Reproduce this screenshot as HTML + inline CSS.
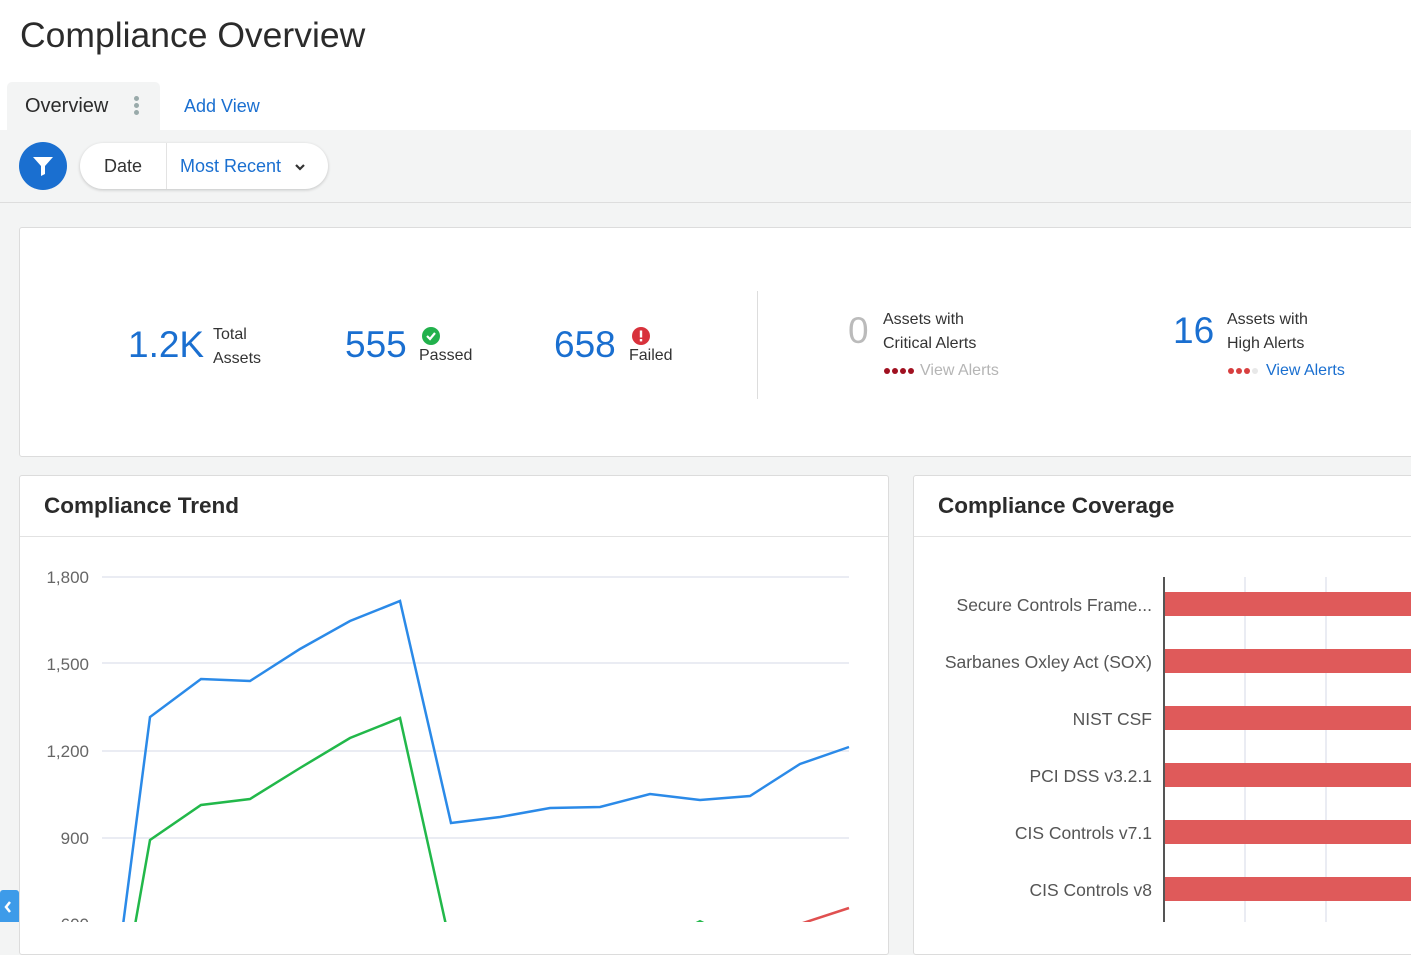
<!DOCTYPE html>
<html><head><meta charset="utf-8"><style>
*{box-sizing:border-box;margin:0;padding:0}
body{width:1411px;height:922px;overflow:hidden;font-family:"Liberation Sans",sans-serif;background:#f3f4f4;position:relative;color:#333}
.abs{position:absolute}
.top{position:absolute;left:0;top:0;width:1411px;height:130px;background:#fff}
.card{position:absolute;background:#fff;border:1px solid #dcdcdc;border-radius:3px}
.blue{color:#1a6fd0}
.dot{display:inline-block;width:6px;height:6px;border-radius:50%;margin-right:2px;vertical-align:middle}
</style></head><body>
<div class="top"></div>
<div class="abs" style="left:20px;top:15px;font-size:35.5px;color:#2b2b2b">Compliance Overview</div>
<div class="abs" style="left:7px;top:82px;width:153px;height:48px;background:#f3f4f4;border-radius:5px 5px 0 0"></div>
<div class="abs" style="left:25px;top:95px;font-size:20px;color:#2b2b2b">Overview</div>
<div class="abs" style="left:134px;top:96px;width:6px;height:20px">
<div style="width:5px;height:5px;border-radius:50%;background:#9aa;margin-bottom:2px"></div><div style="width:5px;height:5px;border-radius:50%;background:#9aa;margin-bottom:2px"></div><div style="width:5px;height:5px;border-radius:50%;background:#9aa"></div></div>
<div class="abs blue" style="left:184px;top:96px;font-size:18px">Add View</div>
<div class="abs" style="left:19px;top:142px;width:48px;height:48px;border-radius:50%;background:#1a6fd0"></div>
<svg class="abs" style="left:31px;top:154px" width="24" height="24" viewBox="0 0 24 24"><path d="M2 3h20l-8 9v8l-4 2v-10z" fill="#fff"/></svg>
<div class="abs" style="left:80px;top:143px;width:248px;height:46px;background:#fff;border-radius:23px;box-shadow:0 1px 3px rgba(0,0,0,.2)"></div>
<div class="abs" style="left:166px;top:143px;width:1px;height:46px;background:#e3e3e3"></div>
<div class="abs" style="left:104px;top:156px;font-size:18px;color:#333">Date</div>
<div class="abs blue" style="left:180px;top:156px;font-size:18px">Most Recent</div>
<svg class="abs" style="left:294px;top:162px" width="12" height="10"><path d="M2 3l4 4 4-4" stroke="#333" stroke-width="2.2" fill="none"/></svg>
<div class="abs" style="left:0;top:202px;width:1411px;height:1px;background:#ddd"></div>

<div class="card" style="left:19px;top:227px;width:1400px;height:230px"></div>
<div class="abs blue" style="left:128px;top:324px;font-size:37px">1.2K</div>
<div class="abs" style="left:213px;top:323px;font-size:16px;line-height:24px;color:#333">Total<br>Assets</div>
<div class="abs blue" style="left:345px;top:324px;font-size:37px">555</div>
<svg class="abs" style="left:422px;top:327px" width="18" height="18"><circle cx="9" cy="9" r="9" fill="#22b14c"/><path d="M5 9l3 3 5-6" stroke="#fff" stroke-width="2.2" fill="none"/></svg>
<div class="abs" style="left:419px;top:347px;font-size:16px;color:#333">Passed</div>
<div class="abs blue" style="left:554px;top:324px;font-size:37px">658</div>
<svg class="abs" style="left:632px;top:327px" width="18" height="18"><circle cx="9" cy="9" r="9" fill="#d8323c"/><rect x="7.8" y="3.5" width="2.4" height="7" fill="#fff"/><rect x="7.8" y="12" width="2.4" height="2.4" fill="#fff"/></svg>
<div class="abs" style="left:629px;top:347px;font-size:16px;color:#333">Failed</div>
<div class="abs" style="left:757px;top:291px;width:1px;height:108px;background:#ddd"></div>
<div class="abs" style="left:848px;top:310px;font-size:37px;color:#bbb">0</div>
<div class="abs" style="left:883px;top:308px;font-size:16px;line-height:24px;color:#333">Assets with<br>Critical Alerts</div>
<div class="abs" style="left:884px;top:362px;font-size:16px;color:#b5b5b5;white-space:nowrap"><span class="dot" style="background:#a01020"></span><span class="dot" style="background:#a01020"></span><span class="dot" style="background:#a01020"></span><span class="dot" style="background:#a01020;margin-right:6px"></span>View Alerts</div>
<div class="abs blue" style="left:1173px;top:310px;font-size:37px">16</div>
<div class="abs" style="left:1227px;top:308px;font-size:16px;line-height:24px;color:#333">Assets with<br>High Alerts</div>
<div class="abs blue" style="left:1228px;top:362px;font-size:16px;white-space:nowrap"><span class="dot" style="background:#d84040"></span><span class="dot" style="background:#d84040"></span><span class="dot" style="background:#d84040"></span><span class="dot" style="background:#e8e8e8;margin-right:8px"></span>View Alerts</div>

<div class="card" style="left:19px;top:475px;width:870px;height:480px"></div>
<div class="abs" style="left:20px;top:536px;width:868px;height:1px;background:#e2e2e2"></div>
<div class="abs" style="left:44px;top:493px;font-size:22.5px;font-weight:bold;color:#2b2b2b">Compliance Trend</div>
<div class="card" style="left:913px;top:475px;width:520px;height:480px"></div>
<div class="abs" style="left:914px;top:536px;width:510px;height:1px;background:#e2e2e2"></div>
<div class="abs" style="left:938px;top:493px;font-size:22.5px;font-weight:bold;color:#2b2b2b">Compliance Coverage</div>

<svg class="abs" style="left:0;top:0" width="1411" height="922">
<g font-family="Liberation Sans" font-size="17" fill="#666" text-anchor="end">
<text x="89" y="583">1,800</text><text x="89" y="670">1,500</text><text x="89" y="757">1,200</text><text x="89" y="844">900</text><text x="89" y="930">600</text>
</g>
<g stroke="#e3e6ef" stroke-width="1.5">
<line x1="102" y1="577" x2="849" y2="577"/><line x1="102" y1="663" x2="849" y2="663"/><line x1="102" y1="751" x2="849" y2="751"/><line x1="102" y1="838" x2="849" y2="838"/>
<line x1="1245" y1="577" x2="1245" y2="922"/><line x1="1326" y1="577" x2="1326" y2="922"/>
</g>
<polyline fill="none" stroke="#2b8ae8" stroke-width="2.5" points="123,925 150,717 201,679 250,681 300,649 350,621 400,601 451,823 500,817 550,808 600,807 650,794 700,800 750,796 800,764 849,747"/>
<polyline fill="none" stroke="#22b84a" stroke-width="2.5" points="135,925 150,840 201,805 250,799 300,768 350,738 400,718 446,925"/>
<polyline fill="none" stroke="#22b84a" stroke-width="2" points="694,924 700,921 706,924"/>
<polyline fill="none" stroke="#e05050" stroke-width="2.5" points="800,924 849,908"/>
<g font-family="Liberation Sans" font-size="17.5" fill="#555" text-anchor="end" textLength="0">
<text x="1152" y="611">Secure Controls Frame...</text><text x="1152" y="668">Sarbanes Oxley Act (SOX)</text><text x="1152" y="725">NIST CSF</text><text x="1152" y="782">PCI DSS v3.2.1</text><text x="1152" y="839">CIS Controls v7.1</text><text x="1152" y="896">CIS Controls v8</text>
</g>
<g fill="#df5a5a">
<rect x="1164" y="592" width="247" height="24"/><rect x="1164" y="649" width="247" height="24"/><rect x="1164" y="706" width="247" height="24"/><rect x="1164" y="763" width="247" height="24"/><rect x="1164" y="820" width="247" height="24"/><rect x="1164" y="877" width="247" height="24"/>
</g>
<line x1="1164" y1="577" x2="1164" y2="922" stroke="#555" stroke-width="2"/>
<rect x="0" y="890" width="19" height="40" rx="3" fill="#3d9be9"/>
<path d="M10 902l-4 5 4 5" stroke="#fff" stroke-width="2.5" fill="none"/>
</svg>
</body></html>
